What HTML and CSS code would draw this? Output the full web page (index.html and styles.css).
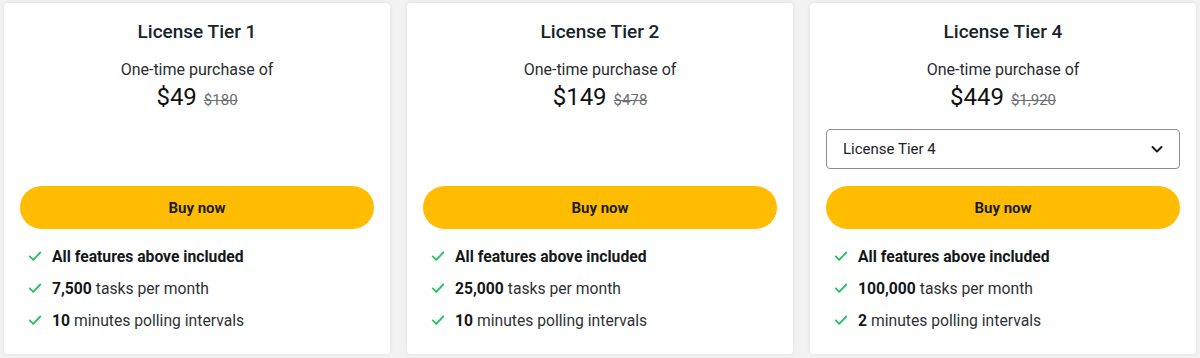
FILE: index.html
```html
<!DOCTYPE html>
<html lang="en">
<head>
<meta charset="utf-8">
<title>Pricing</title>
<link rel="stylesheet" href="styles.css">
</head>
<body>
<div class="tiers">
  <div class="card">
    <h2 class="title">License Tier 1</h2>
    <p class="sub">One-time purchase of</p>
    <div class="price"><span class="now">$49</span><span class="was">$180</span></div>
    <div class="slot"></div>
    <button class="buy">Buy now</button>
    <ul class="features">
      <li><svg class="check" viewBox="0 0 16 16"><path d="M2 8.5l4 4 8-8.5"/></svg><span><b>All features above included</b></span></li>
      <li><svg class="check" viewBox="0 0 16 16"><path d="M2 8.5l4 4 8-8.5"/></svg><span><b>7,500</b> tasks per month</span></li>
      <li><svg class="check" viewBox="0 0 16 16"><path d="M2 8.5l4 4 8-8.5"/></svg><span><b>10</b> minutes polling intervals</span></li>
    </ul>
  </div>
  <div class="card">
    <h2 class="title">License Tier 2</h2>
    <p class="sub">One-time purchase of</p>
    <div class="price"><span class="now">$149</span><span class="was">$478</span></div>
    <div class="slot"></div>
    <button class="buy">Buy now</button>
    <ul class="features">
      <li><svg class="check" viewBox="0 0 16 16"><path d="M2 8.5l4 4 8-8.5"/></svg><span><b>All features above included</b></span></li>
      <li><svg class="check" viewBox="0 0 16 16"><path d="M2 8.5l4 4 8-8.5"/></svg><span><b>25,000</b> tasks per month</span></li>
      <li><svg class="check" viewBox="0 0 16 16"><path d="M2 8.5l4 4 8-8.5"/></svg><span><b>10</b> minutes polling intervals</span></li>
    </ul>
  </div>
  <div class="card">
    <h2 class="title">License Tier 4</h2>
    <p class="sub">One-time purchase of</p>
    <div class="price"><span class="now">$449</span><span class="was">$1,920</span></div>
    <div class="slot">
      <div class="select"><span>License Tier 4</span><svg class="chev" viewBox="0 0 16 16"><path d="M3.5 6l4.5 4.5 4.5-4.5"/></svg></div>
    </div>
    <button class="buy">Buy now</button>
    <ul class="features">
      <li><svg class="check" viewBox="0 0 16 16"><path d="M2 8.5l4 4 8-8.5"/></svg><span><b>All features above included</b></span></li>
      <li><svg class="check" viewBox="0 0 16 16"><path d="M2 8.5l4 4 8-8.5"/></svg><span><b>100,000</b> tasks per month</span></li>
      <li><svg class="check" viewBox="0 0 16 16"><path d="M2 8.5l4 4 8-8.5"/></svg><span><b>2</b> minutes polling intervals</span></li>
    </ul>
  </div>
</div>
</body>
</html>
```
FILE: styles.css
```css
* { box-sizing: border-box; }
html, body { margin: 0; padding: 0; }
body {
  background: #f2f2f3;
  font-family: Roboto, "Liberation Sans", sans-serif;
  color: #1c1f22;
  width: 1200px;
  height: 358px;
  overflow: hidden;
}
.tiers {
  display: flex;
  gap: 17px;
  padding: 3px 4px 0 4px;
}
.card {
  width: 386px;
  height: 351px;
  background: #fff;
  border-radius: 4px;
  box-shadow: 0 0 4px rgba(0,0,0,0.08);
  padding: 17px 16px 0 16px;
  display: flex;
  flex-direction: column;
}
.title {
  margin: 0;
  text-align: center;
  font-size: 19px;
  line-height: 24px;
  font-weight: 500;
  color: #17242a;
}
.sub {
  margin: 15px 0 0;
  text-align: center;
  font-size: 16px;
  line-height: 22px;
  color: #2a2d30;
}
.price {
  margin-top: 1px;
  height: 30px;
  display: flex;
  justify-content: center;
  align-items: baseline;
  gap: 7px;
}
.now {
  font-size: 24px;
  line-height: 30px;
  color: #111;
}
.was {
  font-size: 15px;
  color: #6b6e72;
  text-decoration: line-through;
}
.slot {
  margin-top: 17px;
  height: 40px;
}
.select {
  height: 40px;
  border: 1px solid #8a8d91;
  border-radius: 4px;
  display: flex;
  align-items: center;
  justify-content: space-between;
  padding: 0 14px 0 16px;
  font-size: 15px;
  color: #222;
}
.chev {
  width: 16px;
  height: 16px;
  fill: none;
  stroke: #1c1c1c;
  stroke-width: 2;
  stroke-linecap: round;
  stroke-linejoin: round;
}
.buy {
  margin-top: 17px;
  height: 43px;
  border: none;
  border-radius: 22px;
  background: #ffbc00;
  font-family: Roboto, "Liberation Sans", sans-serif;
  font-size: 15px;
  font-weight: 700;
  color: #1c1c1c;
  width: 100%;
}
.features {
  list-style: none;
  margin: 11px 0 0;
  padding: 0 0 0 8px;
}
.features li {
  height: 32px;
  display: flex;
  align-items: center;
  gap: 10px;
  font-size: 15.7px;
  color: #2f3235;
}
.features b { color: #151719; font-weight: 700; }
.check {
  width: 14px;
  height: 14px;
  fill: none;
  stroke: #22c55e;
  stroke-width: 2.1;
  stroke-linecap: round;
  stroke-linejoin: round;
}
```
